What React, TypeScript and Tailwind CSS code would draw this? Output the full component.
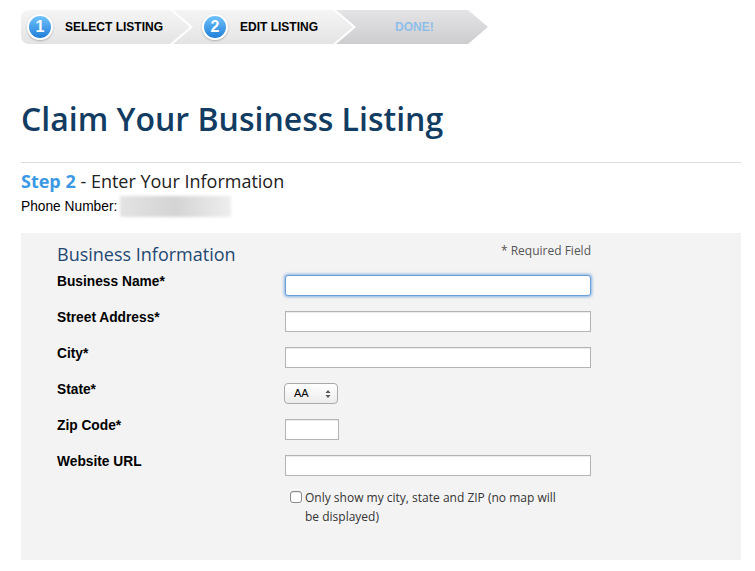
import React from 'react'

const fields = [
  { label: 'Business Name*', kind: 'focus' },
  { label: 'Street Address*', kind: 'text' },
  { label: 'City*', kind: 'text' },
  { label: 'State*', kind: 'select' },
  { label: 'Zip Code*', kind: 'zip' },
  { label: 'Website URL', kind: 'text' },
]

function StepCircle({ n }: { n: number }) {
  return (
    <div className="w-[26px] h-[26px] rounded-full border-2 border-white bg-gradient-to-b from-[#6fc2fb] to-[#1c7fd8] shadow-[0_1px_2px_rgba(0,0,0,0.25)] flex items-center justify-center text-white font-bold text-[16px] leading-none">
      {n}
    </div>
  )
}

function Field({ kind }: { kind: string }) {
  if (kind === 'focus') {
    return (
      <input className="w-[306px] h-[21px] bg-white border border-[#6b9fd6] rounded-[3px] shadow-[0_0_3px_1px_rgba(91,151,220,0.7)] outline-none" />
    )
  }
  if (kind === 'select') {
    return (
      <div className="w-[54px] h-[21px] -ml-px rounded-[4px] border border-[#a9a9a9] bg-gradient-to-b from-white to-[#ececec] flex items-center justify-between pl-[9px] pr-[6px] text-[11px] text-black">
        <span>AA</span>
        <svg width="6" height="10" viewBox="0 0 6 10">
          <path d="M3 1 L5.5 4 H0.5 Z M3 9 L5.5 6 H0.5 Z" fill="#555" />
        </svg>
      </div>
    )
  }
  return (
    <input
      className={
        (kind === 'zip' ? 'w-[54px]' : 'w-[306px]') +
        ' h-[21px] bg-white border border-[#b3b3b3] shadow-[inset_0_1px_1px_rgba(0,0,0,0.08)] outline-none'
      }
    />
  )
}

export default function App() {
  return (
    <div className="w-[755px] h-[571px] bg-white overflow-hidden pt-[10px] pl-[21px] pr-[14px] font-['Liberation_Sans',Arial,sans-serif]">
      {/* progress steps */}
      <div className="flex h-[34px]">
        <div className="w-[169px] h-full rounded-l-[8px] bg-gradient-to-b from-[#f5f5f5] to-[#e4e4e4] [clip-path:polygon(0_0,calc(100%-20px)_0,100%_50%,calc(100%-20px)_100%,0_100%)] flex items-center pl-[6px] gap-[12px]">
          <StepCircle n={1} />
          <span className="text-[12px] font-bold text-black">SELECT LISTING</span>
        </div>
        <div className="w-[180px] h-full -ml-[17px] bg-gradient-to-b from-[#f5f5f5] to-[#e4e4e4] [clip-path:polygon(0_0,calc(100%-20px)_0,100%_50%,calc(100%-20px)_100%,0_100%,20px_50%)] flex items-center pl-[29px] gap-[12px]">
          <StepCircle n={2} />
          <span className="text-[12px] font-bold text-black">EDIT LISTING</span>
        </div>
        <div className="w-[152px] h-full -ml-[17px] bg-gradient-to-b from-[#e4e4e6] to-[#cdcdd0] [clip-path:polygon(0_0,calc(100%-20px)_0,100%_50%,calc(100%-20px)_100%,0_100%,20px_50%)] flex items-center pl-[59px]">
          <span className="text-[12px] font-bold text-[#8ebee8]">DONE!</span>
        </div>
      </div>

      <h1 className="mt-[55px] text-[32px] leading-[40px] font-semibold text-[#123c62] font-['Open_Sans',sans-serif]">
        Claim Your Business Listing
      </h1>

      <div className="mt-[23px] border-t border-[#dcdcdc]" />

      <div className="mt-[6px] text-[18px] leading-[24px] text-[#222] font-['Open_Sans',sans-serif]">
        <span className="font-bold text-[#3b98e5]">Step 2</span> - Enter Your Information
      </div>

      <div className="mt-[3px] flex items-center text-[13.75px] leading-[16px] text-black">
        <span>Phone Number:</span>
        <div className="ml-[3px] w-[111px] h-[21px] bg-gradient-to-r from-[#e3e3e3] via-[#d4d4d4] to-[#eeeeee] blur-[1.5px]" />
      </div>

      {/* form panel */}
      <div className="mt-[16px] h-[327px] bg-[#f3f3f3] pl-[36px] pt-[9px]">
        <div className="w-[534px] flex items-start justify-between font-['Open_Sans',sans-serif]">
          <h2 className="text-[18px] leading-[24px] text-[#1f4871]">Business Information</h2>
          <span className="-mt-[1px] text-[12px] leading-[20px] text-[#555]">* Required Field</span>
        </div>

        <div className="mt-[9px] flex flex-col gap-[15px]">
          {fields.map((f) => (
            <div key={f.label} className="flex items-start">
              <label className="w-[228px] text-[13.75px] font-bold leading-[16px] text-black -mt-[1px]">{f.label}</label>
              <Field kind={f.kind} />
            </div>
          ))}
        </div>

        <label className="mt-[12px] ml-[233px] w-[280px] flex items-start gap-[3px] text-[12px] leading-[19px] text-[#333] font-['Open_Sans',sans-serif]">
          <span className="mt-[3px] w-[12px] h-[12px] shrink-0 rounded-[3px] border border-[#8a8a8a] bg-white shadow-[inset_0_1px_1px_rgba(0,0,0,0.1)]" />
          <span>Only show my city, state and ZIP (no map will be displayed)</span>
        </label>
      </div>
    </div>
  )
}
